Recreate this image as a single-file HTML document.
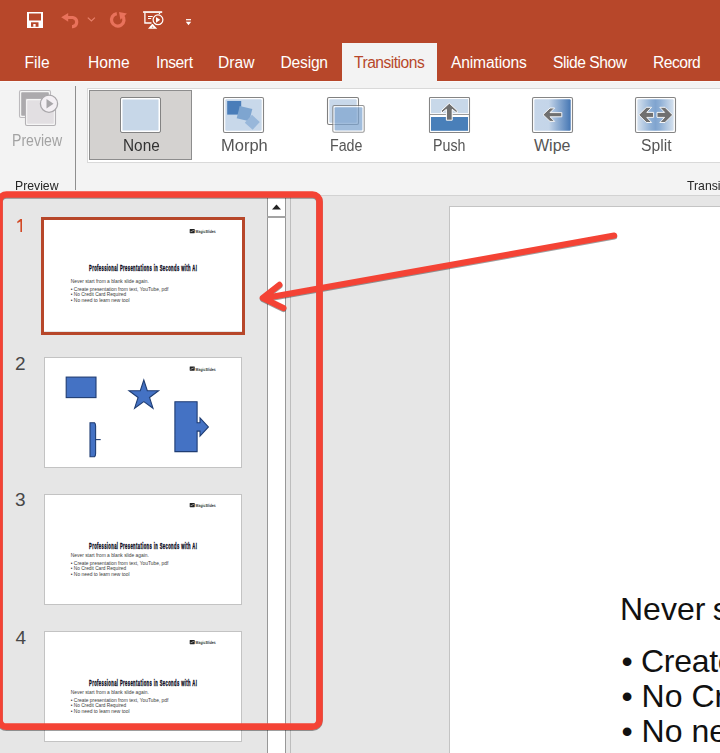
<!DOCTYPE html>
<html><head><meta charset="utf-8">
<style>
*{margin:0;padding:0;box-sizing:border-box}
html,body{width:720px;height:753px;overflow:hidden;background:#e6e6e6;font-family:"Liberation Sans",sans-serif}
.a{position:absolute}
.t{position:absolute;white-space:nowrap;line-height:1}
#title{left:0;top:0;width:720px;height:81px;background:#b7472a}
#ribbon{left:0;top:81px;width:720px;height:115px;background:#f3f3f3;border-top:1px solid #fafafa;border-bottom:1px solid #d2d2d2}
.tab{color:#fff;font-size:15.6px}
</style></head><body>
<div id="title" class="a"></div>
<div id="ribbon" class="a"></div>

<!-- quick access icons -->
<svg class="a" style="left:0;top:0" width="200" height="40" viewBox="0 0 200 40">
  <!-- save -->
  <rect x="27" y="12" width="16" height="16" fill="#fff"/>
  <rect x="29" y="13.5" width="12" height="7" fill="#b7472a"/>
  <rect x="31" y="22.3" width="7.5" height="4.5" fill="#b7472a"/>
  <rect x="33.3" y="24" width="2.3" height="2.8" fill="#fff"/>
  <!-- undo -->
  <path d="M61.2 17.3 L68.2 13 V21.8 Z" fill="#e9725b"/>
  <path d="M67 17.5 H72.8 A4.6 4.6 0 0 1 72.8 26.6 H72" fill="none" stroke="#e9725b" stroke-width="3.2"/>
  <path d="M87.8 17.6 L91.4 21 L94.9 17.6" fill="none" stroke="#e8806a" stroke-width="1.2"/>
  <!-- repeat -->
  <path d="M116.8 13.6 A6.25 6.25 0 1 0 122.2 15.4" fill="none" stroke="#e9725b" stroke-width="3.3"/>
  <path d="M119 12.1 L126.9 13.4 L120.4 19.8 Z" fill="#e9725b"/>
  <!-- present -->
  <rect x="143.1" y="11.2" width="19.1" height="1.7" fill="#fff"/>
  <path d="M144.9 12.9 V23 H151.5 M159.5 12.9 V14.3" fill="none" stroke="#fff" stroke-width="1.3"/>
  <path d="M148 16.5 H152.7 M148 18.5 H151.2" stroke="#fff" stroke-width="1.2"/>
  <circle cx="158" cy="19.8" r="4.9" fill="#b7472a" stroke="#fff" stroke-width="1.2"/>
  <path d="M156 16.9 L160.2 19.8 L156 22.7 Z" fill="#fff"/>
  <path d="M152 24 L148 28.7 H157.2 L152.8 24 Z" fill="#fff"/>
  <path d="M152.5 26.6 L151.6 27.6 H153.6 Z" fill="#b7472a"/>
  <!-- customize -->
  <rect x="186" y="19.1" width="5" height="1.2" fill="#fff"/>
  <path d="M185.8 21.8 H191.2 L188.5 25.2 Z" fill="#fff"/>
</svg>

<!-- tabs -->
<div class="a" style="left:342px;top:43px;width:95px;height:39px;background:#f3f3f3"></div>
<div class="t tab" style="left:24.5px;top:55px">File</div>
<div class="t tab" style="left:88px;top:55px">Home</div>
<div class="t tab" style="left:156px;top:55px;letter-spacing:-0.4px">Insert</div>
<div class="t tab" style="left:218px;top:55px">Draw</div>
<div class="t tab" style="left:280.5px;top:55px;letter-spacing:-0.2px">Design</div>
<div class="t tab" style="left:354px;top:55px;letter-spacing:-0.5px;color:#b7472a">Transitions</div>
<div class="t tab" style="left:451px;top:55px;letter-spacing:-0.15px">Animations</div>
<div class="t tab" style="left:553px;top:55px;letter-spacing:-0.45px">Slide Show</div>
<div class="t tab" style="left:653px;top:55px;letter-spacing:-0.5px">Record</div>


<!-- ribbon content -->
<svg class="a" style="left:0;top:82px" width="80" height="50" viewBox="0 82 80 50">
  <rect x="19.5" y="90.5" width="31" height="27" rx="1.5" fill="#f6f6f6" stroke="#bcbabd" stroke-width="1.1"/>
  <rect x="21.2" y="92.2" width="27.6" height="23.6" rx="0.8" fill="#acaaad"/>
  <rect x="25.5" y="98.5" width="30" height="27" rx="1.5" fill="#f6f6f6" stroke="#b3b1b4" stroke-width="1.1"/>
  <rect x="27.2" y="100.2" width="26.6" height="23.6" rx="0.8" fill="#e2dfe2"/>
  <circle cx="49" cy="103.7" r="8.6" fill="#f4f0f4" stroke="#a9a7aa" stroke-width="1.3"/>
  <path d="M46.5 99 L53.5 103.7 L46.5 108.4 Z" fill="#a8a6a9"/>
</svg>
<div class="t" style="left:12px;top:132.5px;font-size:16px;color:#a3a3a3;transform-origin:0 0;transform:scaleX(0.88)">Preview</div>
<div class="a" style="left:75px;top:86px;width:1px;height:104px;background:#8e8e8e"></div>
<div class="t" style="left:15px;top:179px;font-size:13px;color:#262626;transform-origin:0 0;transform:scaleX(0.94)">Preview</div>
<div class="t" style="left:687px;top:179px;font-size:13px;color:#262626;transform-origin:0 0;transform:scaleX(0.94)">Transitions</div>

<!-- gallery -->
<div class="a" style="left:87px;top:88px;width:640px;height:75px;background:#fff;border:1px solid #d9d9d9"></div>
<div class="a" style="left:89px;top:90px;width:103px;height:70px;background:#d4d2d0;border:1px solid #8d8d8d"></div>
<div class="a" style="left:120px;top:97px;width:41px;height:36px;background:#c7d7e8;border:1px solid #838383;box-shadow:inset 0 0 0 1.5px #fff;border-radius:2px"></div>
<div class="t" style="left:122.7px;top:137.5px;font-size:16px;color:#333;transform-origin:0 0;transform:scaleX(0.96)">None</div>

<svg class="a" style="left:200px;top:90px" width="520" height="50" viewBox="200 90 520 50">
  <defs>
    <linearGradient id="gw" x1="0" x2="1" y1="0" y2="0">
      <stop offset="0" stop-color="#c6d6e9"/><stop offset="0.4" stop-color="#c4d5e9"/><stop offset="1" stop-color="#4677b4"/>
    </linearGradient>
    <linearGradient id="gs" x1="0" x2="1" y1="0" y2="0">
      <stop offset="0" stop-color="#d5e1ee"/><stop offset="0.38" stop-color="#8eafd5"/><stop offset="0.5" stop-color="#80a4cf"/><stop offset="0.62" stop-color="#8eafd5"/><stop offset="1" stop-color="#d5e1ee"/>
    </linearGradient>
  </defs>
  <!-- morph -->
  <rect x="223.5" y="97.5" width="40" height="35" rx="1.5" fill="#fff" stroke="#858585" stroke-width="1.1"/>
  <rect x="225.3" y="99.3" width="36.4" height="31.4" rx="1.2" fill="#c8d8ea"/>
  <rect x="227.2" y="101" width="14" height="13.6" fill="#4a7db9"/>
  <rect x="238" y="107.3" width="13" height="12.6" fill="#7ea5d0" transform="rotate(14 244.5 113.6)"/>
  <rect x="247" y="117" width="10.6" height="10.6" fill="#98b7da" transform="rotate(42 252.3 122.3)"/>
  <!-- fade -->
  <rect x="327.5" y="97.5" width="31" height="27" rx="1.5" fill="#fff" stroke="#808080" stroke-width="1.1"/>
  <rect x="329.3" y="99.3" width="27.4" height="23.4" rx="1" fill="#c8d8ea"/>
  <g opacity="0.72">
  <rect x="332.8" y="105.5" width="31.4" height="26.8" rx="1.5" fill="#fff" stroke="#707070" stroke-width="1.1"/>
  <rect x="334.6" y="107.3" width="27.8" height="23.2" rx="1" fill="#7ea4cf"/>
  </g>
  <!-- push -->
  <rect x="429.5" y="97.5" width="40" height="35" rx="0.8" fill="#fff" stroke="#858585" stroke-width="1.1"/>
  <rect x="431" y="99" width="37" height="14.2" fill="#c8d8e9"/>
  <rect x="430" y="114" width="39" height="1" fill="#9a9a9a"/>
  <rect x="431" y="117" width="37" height="13.8" fill="#497fb9"/>
  <path d="M449.3 103.2 L457.2 110.6 V113.3 L452.2 109.3 V120.2 H446.4 V109.3 L441.4 113.3 V110.6 Z" fill="#707070" stroke="#fff" stroke-width="1"/>
  <!-- wipe -->
  <rect x="532.5" y="97.5" width="40" height="35" rx="1.5" fill="#fff" stroke="#858585" stroke-width="1.1"/>
  <rect x="534.3" y="99.3" width="36.4" height="31.4" rx="1.2" fill="url(#gw)"/>
  <path d="M543 114.7 L550 108 H554.6 L550 112.6 H561.8 V116.8 H550 L554.6 121.4 H550 Z" fill="#707070" stroke="#fff" stroke-width="0.9" stroke-linejoin="round"/>
  <!-- split -->
  <rect x="635.5" y="97.5" width="40" height="35" rx="1.5" fill="#fff" stroke="#858585" stroke-width="1.1"/>
  <rect x="637.3" y="99.3" width="36.4" height="31.4" rx="1.2" fill="url(#gs)"/>
  <path d="M638.8 114.9 L646.4 107.3 H651.6 L646.8 112.4 H653.6 V117.4 H646.8 L651.6 122.5 H646.4 Z" fill="#707070" stroke="#fff" stroke-width="0.9" stroke-linejoin="round"/>
  <path d="M672.6 114.9 L665 107.3 H659.8 L664.6 112.4 H657 V117.4 H664.6 L659.8 122.5 H665 Z" fill="#707070" stroke="#fff" stroke-width="0.9" stroke-linejoin="round"/>
</svg>
<div class="t" style="left:220.5px;top:137.5px;font-size:16px;color:#555;transform-origin:0 0;transform:scaleX(1.03)">Morph</div>
<div class="t" style="left:330px;top:137.5px;font-size:16px;color:#555;transform-origin:0 0;transform:scaleX(0.89)">Fade</div>
<div class="t" style="left:433.2px;top:137.5px;font-size:16px;color:#555;transform-origin:0 0;transform:scaleX(0.89)">Push</div>
<div class="t" style="left:534px;top:137.5px;font-size:16px;color:#555;transform-origin:0 0;transform:scaleX(1.0)">Wipe</div>
<div class="t" style="left:640.6px;top:137.5px;font-size:16px;color:#555;transform-origin:0 0;transform:scaleX(0.98)">Split</div>


<!-- slide pane -->
<div class="a" style="left:267px;top:198px;width:19px;height:560px;background:#fff;border-left:1px solid #989898;border-right:1px solid #989898"></div>
<div class="a" style="left:267px;top:216px;width:19px;height:1.5px;background:#a3a3a3"></div>
<svg class="a" style="left:271px;top:203px" width="12" height="8" viewBox="0 0 12 8"><path d="M1 6.5 L5.5 1.5 L10 6.5 Z" fill="#222"/></svg>
<div class="a" style="left:290px;top:196px;width:1px;height:560px;background:#bdbdbd"></div>

<svg class="a" style="left:14px;top:216px" width="12" height="18" viewBox="14 216 12 18"><path d="M20.4 219 H22 V232 H20.4 V221.4 L17.3 223.2 V221.5 Z" fill="#d24a26"/></svg>
<div class="t" style="left:15px;top:353.5px;font-size:19px;color:#474747">2</div>
<div class="t" style="left:15px;top:490px;font-size:19px;color:#474747">3</div>
<div class="t" style="left:15.5px;top:627.5px;font-size:19px;color:#474747">4</div>


<!-- thumbs -->
<svg class="a" style="left:44px;top:220px" width="198" height="111" viewBox="0 0 198 111">
  <rect x="0" y="0" width="198" height="111" fill="#fff"/>
  <rect x="145.7" y="8.9" width="5" height="4.3" rx="0.4" fill="#222"/><path d="M146.5 11.6 L149.8 10 V10.8 L146.5 12.3 Z" fill="#bbb"/>
  <text transform="translate(151.6 12.6) scale(0.5)" x="0" y="0" font-family="Liberation Sans" font-weight="bold" font-size="8.8" textLength="40" lengthAdjust="spacingAndGlyphs" fill="#333" text-rendering="geometricPrecision">MagicSlides</text>
  <text transform="translate(45 50.9) scale(0.44 1)" x="0" y="0" font-family="Liberation Sans" font-weight="bold" font-size="9.4" textLength="245" lengthAdjust="spacing" fill="#0a0a1a" stroke="#0a0a1a" stroke-width="0.4">Professional Presentations in Seconds with AI</text>
  <g font-family="Liberation Sans" font-size="5.2" fill="#3a3a3a">
  <text x="26.8" y="63" textLength="78" lengthAdjust="spacingAndGlyphs">Never start from a blank slide again.</text>
  <text x="26.8" y="71.2" textLength="97.6" lengthAdjust="spacingAndGlyphs">• Create presentation from text, YouTube, pdf</text>
  <text x="26.8" y="76.4" textLength="55.3" lengthAdjust="spacingAndGlyphs">• No Credit Card Required</text>
  <text x="26.8" y="81.8" textLength="58.8" lengthAdjust="spacingAndGlyphs">• No need to learn new tool</text>
  </g>
</svg>
<div class="a" style="left:41px;top:217px;width:204px;height:118px;border:3px solid #b7472a"></div>
<svg class="a" style="left:44px;top:357px" width="198" height="111" viewBox="44 357 198 111">
  <rect x="44.5" y="357.5" width="197" height="110" fill="#fff" stroke="#c3c3c3" stroke-width="1"/>
  <g fill="#4472c4" stroke="#1f3d73" stroke-width="1.1">
  <rect x="66.2" y="377.1" width="29.8" height="20.5"/>
  <path d="M143.8 380.0 L147.3 390.7 L158.6 390.8 L149.5 397.5 L153.0 408.2 L143.8 401.6 L134.6 408.2 L138.1 397.5 L129.0 390.8 L140.3 390.7 Z"/>
  <path d="M90 422.7 H94.5 Q95.6 423.5 95.6 426 V453.5 Q95.6 456 94.5 456.7 H90 Z"/>
  <path d="M95.6 439.6 H100.7" fill="none"/>
  <path d="M174.9 401.8 H197.1 V422.7 H200 V417.8 L208.4 426.9 L200 436 V431.1 H197.1 V451.6 H174.9 Z"/>
  </g>
  <rect x="189.7" y="366.4" width="5" height="4.3" rx="0.4" fill="#222"/><path d="M190.5 369.1 L193.8 367.5 V368.3 L190.5 369.8 Z" fill="#bbb"/>
  <text transform="translate(195.6 370.8) scale(0.5)" x="0" y="0" font-family="Liberation Sans" font-weight="bold" font-size="8.8" textLength="40" lengthAdjust="spacingAndGlyphs" fill="#333" text-rendering="geometricPrecision">MagicSlides</text>
</svg>
<svg class="a" style="left:44px;top:494px" width="198" height="111" viewBox="0 0 198 111">
  <rect x="0.5" y="0.5" width="197" height="110" fill="#fff" stroke="#c3c3c3" stroke-width="1"/>
  <rect x="145.7" y="8.9" width="5" height="4.3" rx="0.4" fill="#222"/><path d="M146.5 11.6 L149.8 10 V10.8 L146.5 12.3 Z" fill="#bbb"/>
  <text transform="translate(151.6 12.6) scale(0.5)" x="0" y="0" font-family="Liberation Sans" font-weight="bold" font-size="8.8" textLength="40" lengthAdjust="spacingAndGlyphs" fill="#333" text-rendering="geometricPrecision">MagicSlides</text>
  <text transform="translate(45 54.7) scale(0.44 1)" x="0" y="0" font-family="Liberation Sans" font-weight="bold" font-size="9.4" textLength="245" lengthAdjust="spacing" fill="#0a0a1a" stroke="#0a0a1a" stroke-width="0.4">Professional Presentations in Seconds with AI</text>
  <g font-family="Liberation Sans" font-size="5.2" fill="#3a3a3a">
  <text x="26.8" y="63" textLength="78" lengthAdjust="spacingAndGlyphs">Never start from a blank slide again.</text>
  <text x="26.8" y="71.2" textLength="97.6" lengthAdjust="spacingAndGlyphs">• Create presentation from text, YouTube, pdf</text>
  <text x="26.8" y="76.4" textLength="55.3" lengthAdjust="spacingAndGlyphs">• No Credit Card Required</text>
  <text x="26.8" y="81.8" textLength="58.8" lengthAdjust="spacingAndGlyphs">• No need to learn new tool</text>
  </g>
</svg>
<svg class="a" style="left:44px;top:631px" width="198" height="111" viewBox="0 0 198 111">
  <rect x="0.5" y="0.5" width="197" height="110" fill="#fff" stroke="#c3c3c3" stroke-width="1"/>
  <rect x="145.7" y="8.9" width="5" height="4.3" rx="0.4" fill="#222"/><path d="M146.5 11.6 L149.8 10 V10.8 L146.5 12.3 Z" fill="#bbb"/>
  <text transform="translate(151.6 12.6) scale(0.5)" x="0" y="0" font-family="Liberation Sans" font-weight="bold" font-size="8.8" textLength="40" lengthAdjust="spacingAndGlyphs" fill="#333" text-rendering="geometricPrecision">MagicSlides</text>
  <text transform="translate(45 54.7) scale(0.44 1)" x="0" y="0" font-family="Liberation Sans" font-weight="bold" font-size="9.4" textLength="245" lengthAdjust="spacing" fill="#0a0a1a" stroke="#0a0a1a" stroke-width="0.4">Professional Presentations in Seconds with AI</text>
  <g font-family="Liberation Sans" font-size="5.2" fill="#3a3a3a">
  <text x="26.8" y="63" textLength="78" lengthAdjust="spacingAndGlyphs">Never start from a blank slide again.</text>
  <text x="26.8" y="71.2" textLength="97.6" lengthAdjust="spacingAndGlyphs">• Create presentation from text, YouTube, pdf</text>
  <text x="26.8" y="76.4" textLength="55.3" lengthAdjust="spacingAndGlyphs">• No Credit Card Required</text>
  <text x="26.8" y="81.8" textLength="58.8" lengthAdjust="spacingAndGlyphs">• No need to learn new tool</text>
  </g>
</svg>
<!-- main slide -->
<div class="a" style="left:449px;top:206px;width:400px;height:600px;background:#fff;border:1px solid #c4c4c4"></div>
<div class="t" style="left:620px;top:593px;font-size:32px;color:#111;word-spacing:-1.5px">Never start from a blank slide again.</div>
<div class="t" style="left:621.5px;top:645px;font-size:32px;color:#111;letter-spacing:-0.3px">• Create presentation from text</div>
<div class="t" style="left:621.5px;top:680px;font-size:32px;color:#111">• No Credit Card Required</div>
<div class="t" style="left:621.5px;top:714.5px;font-size:32px;color:#111">• No need to learn new tool</div>


<!-- annotation -->
<svg class="a" style="left:0;top:0;filter:drop-shadow(0.6px 1.3px 0.7px rgba(0,0,0,0.38))" width="720" height="753" viewBox="0 0 720 753">
  <rect x="-0.5" y="194.5" width="320" height="532.2" rx="7" ry="7" fill="none" stroke="#f44335" stroke-width="6.7"/>
  <path d="M614.2 235.6 L263.8 298.3 M279.4 284.8 L262.8 297.9 L283.4 308" fill="none" stroke="#f44335" stroke-width="6.1" stroke-linecap="round" stroke-linejoin="round"/>
</svg>

</body></html>
